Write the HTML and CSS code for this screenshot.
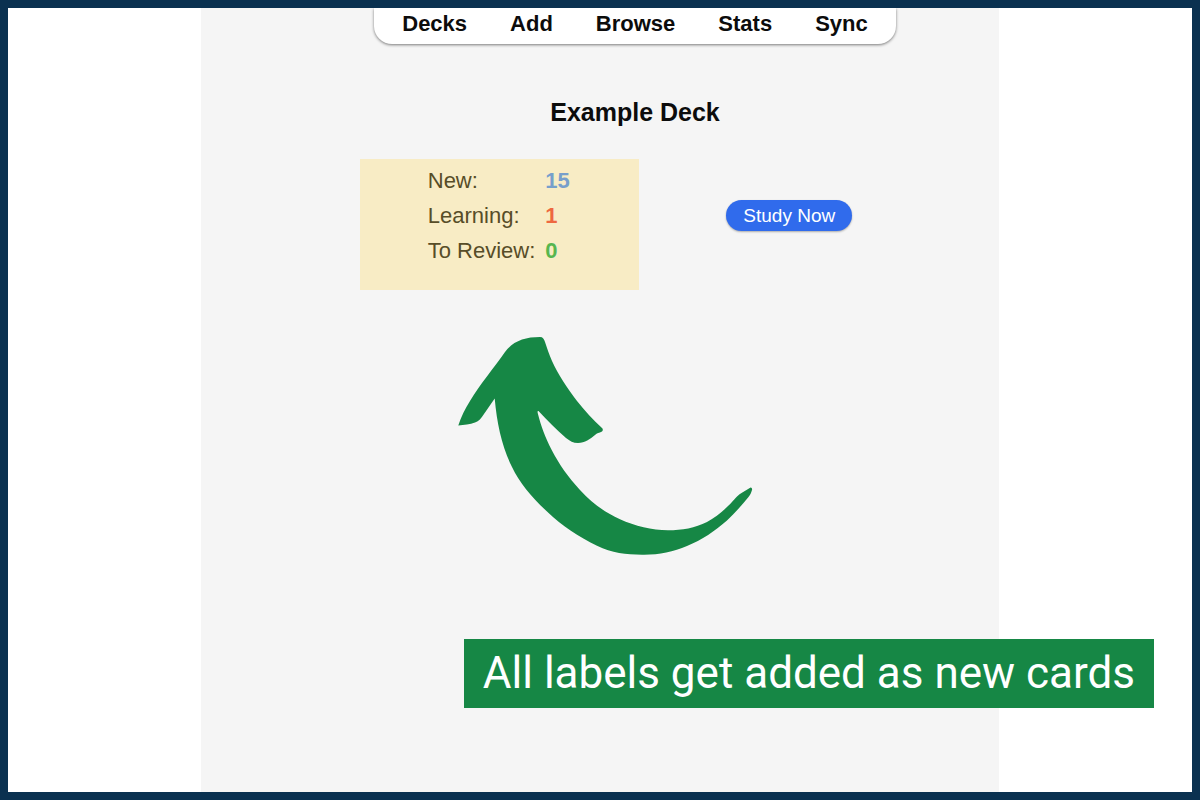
FILE: index.html
```html
<!DOCTYPE html>
<html lang="en">
<head>
    <meta charset="UTF-8">
    <meta name="viewport" content="width=device-width, initial-scale=1.0">
    <title>Example Deck</title>
    <link rel="stylesheet" href="styles.css">
</head>
<body>
    <div class="frame">
        <div class="panel">
            <nav class="toolbar">
                <a href="#">Decks</a>
                <a href="#">Add</a>
                <a href="#">Browse</a>
                <a href="#">Stats</a>
                <a href="#">Sync</a>
            </nav>

            <h1 class="deck-title">Example Deck</h1>

            <main class="overview">
                <div class="summary">
                    <div class="highlight">
                        <table class="counts">
                            <tr>
                                <th scope="row">New:</th>
                                <td class="new">15</td>
                            </tr>
                            <tr>
                                <th scope="row">Learning:</th>
                                <td class="learning">1</td>
                            </tr>
                            <tr>
                                <th scope="row">To Review:</th>
                                <td class="review">0</td>
                            </tr>
                        </table>
                    </div>
                    <button class="study-button" type="button">Study Now</button>
                </div>

                <svg class="arrow" viewBox="458 336 296 220" aria-hidden="true">
                    <path d="M458.3 425.5 C461 417 465 409 470 401 C480 384 494 368 505 352 C513 341 525 337 540 337 C543 337 544 339 545 342 C547 348 549 354 552 361 C558 374 567 388 577 401 C585 411 593 420 602 428 C603.2 429 603 431 602 431.5 C599 433 597 433 595 435 C590 439 585 443 578 443 C573 443 570 441 566 438 C556 429 548 421 538.5 411 C537.5 410.5 537.5 412 537.7 413 C541 426 545 437 551.7 450 C559 464 568 477 580 490 C592 503 605 512.5 620 519.3 C635 526 652 530.3 668 530.3 C682 530.3 695 528 707 522 C718 516 728 507 736.5 497 C740 493 746 490.5 750.5 487.5 C752 487.5 752.3 489 752 490 C751 493 750.5 494.5 748.5 497 C742 505 735 513 727 520.5 C715 531 702 540 687 546 C673 552 658 555 642 554.7 C626 554.5 612 553 597 545.7 C578 536.5 563 526.5 547 511.5 C532 497.5 519.5 483 512 467 C502 447 497 424 494.7 398.5 L484 414 C481 418.5 479 421 475 422.5 C470 424.5 464 424.5 458.3 425.5 Z"/>
                </svg>
            </main>
        </div>

        <p class="caption">All labels get added as new cards</p>
    </div>
</body>
</html>
```

FILE: styles.css
```css
* {
    box-sizing: border-box;
}

body {
    margin: 0;
    font-family: "Liberation Sans", Arial, sans-serif;
    font-size: 22px;
    color: #0c0c0c;
}

.frame {
    position: relative;
    display: flex;
    justify-content: center;
    min-height: 100vh;
    border: 8px solid #0a3150;
    background-color: #fff;
}

.panel {
    display: flex;
    flex-direction: column;
    align-items: center;
    width: 67.4%;
    padding-left: 70px;
    background-color: #f5f5f5;
}

.toolbar {
    display: flex;
    gap: 43px;
    height: 36px;
    padding: 2px 28px 0;
    border-radius: 0 0 18px 18px;
    background-color: #fff;
    box-shadow: 0 1px 3px rgba(0, 0, 0, 0.5);
    clip-path: inset(0 -6px -6px -6px);
}

.toolbar a {
    color: inherit;
    font-weight: bold;
    line-height: 28px;
    text-decoration: none;
}

.deck-title {
    margin: 52px 0 31px;
    font-size: 25px;
    line-height: 32px;
}

.overview {
    display: flex;
    flex-direction: column;
    align-items: center;
    gap: 46px;
    padding-right: 58px;
}

.summary {
    display: flex;
    gap: 87px;
    align-items: flex-start;
}

.highlight {
    padding: 4px 68px 22px;
    background-color: #f8ecc5;
}

.counts {
    border-collapse: collapse;
    line-height: 35px;
}

.counts th,
.counts td {
    padding: 0;
    text-align: left;
}

.counts th {
    padding-right: 10px;
    color: #574d28;
    font-weight: normal;
}

.counts td {
    width: 26px;
    font-weight: bold;
}

.counts .new {
    color: #779fcb;
}

.counts .learning {
    color: #ee6840;
}

.counts .review {
    color: #57b64f;
}

.study-button {
    margin-top: 41px;
    padding: 0 17px;
    border: none;
    border-radius: 16px;
    background-color: #306bec;
    box-shadow: 0 1px 2px rgba(0, 0, 0, 0.3);
    color: #fff;
    font-family: inherit;
    font-size: 19px;
    line-height: 31px;
    cursor: pointer;
}

.arrow {
    width: 296px;
    height: 220px;
    fill: #168745;
}

/* callout sits over the panel edge */
.caption {
    position: absolute;
    right: 38px;
    bottom: 84px;
    margin: 0;
    padding: 0 19px;
    background-color: #168745;
    color: #fff;
    font-family: Roboto, sans-serif;
    font-size: 44px;
    line-height: 69px;
}
```
